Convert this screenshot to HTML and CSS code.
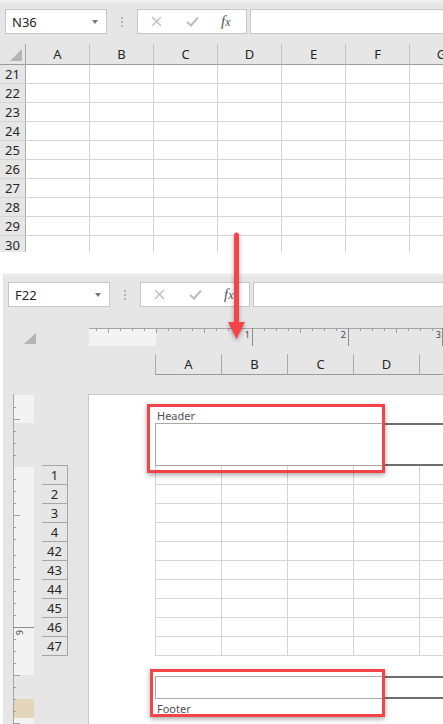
FILE: index.html
```html
<!DOCTYPE html>
<html lang="en">
<head>
    <meta charset="UTF-8">
    <meta name="viewport" content="width=device-width, initial-scale=1.0">
    <title>Excel Header and Footer</title>
    <link rel="stylesheet" href="styles.css">
</head>
<body>
<div class="shot">

    <!-- Normal view -->
    <section class="win win-top">
        <div class="fbar">
            <div class="namebox"><span>N36</span><i class="caret"></i></div>
            <div class="grip"><b></b><b></b><b></b></div>
            <div class="fbtns">
                <svg class="ico-x" width="11" height="11" viewBox="0 0 11 11"><path d="M1 1L10 10M10 1L1 10" /></svg>
                <svg class="ico-ok" width="13" height="11" viewBox="0 0 13 11"><path d="M1 6L5 9.5L12 1.5" /></svg>
                <span class="fx">f<small>x</small></span>
            </div>
            <div class="finput"></div>
        </div>

        <div class="sheet">
            <div class="row hdr">
                <div class="rh corner"><i class="tri"></i></div>
                <div class="c">A</div><div class="c">B</div><div class="c">C</div><div class="c">D</div>
                <div class="c">E</div><div class="c">F</div><div class="c">G</div><div class="c">H</div>
            </div>
            <div class="row"><div class="rh">21</div><div class="c"></div><div class="c"></div><div class="c"></div><div class="c"></div><div class="c"></div><div class="c"></div><div class="c"></div><div class="c"></div></div>
            <div class="row"><div class="rh">22</div><div class="c"></div><div class="c"></div><div class="c"></div><div class="c"></div><div class="c"></div><div class="c"></div><div class="c"></div><div class="c"></div></div>
            <div class="row"><div class="rh">23</div><div class="c"></div><div class="c"></div><div class="c"></div><div class="c"></div><div class="c"></div><div class="c"></div><div class="c"></div><div class="c"></div></div>
            <div class="row"><div class="rh">24</div><div class="c"></div><div class="c"></div><div class="c"></div><div class="c"></div><div class="c"></div><div class="c"></div><div class="c"></div><div class="c"></div></div>
            <div class="row"><div class="rh">25</div><div class="c"></div><div class="c"></div><div class="c"></div><div class="c"></div><div class="c"></div><div class="c"></div><div class="c"></div><div class="c"></div></div>
            <div class="row"><div class="rh">26</div><div class="c"></div><div class="c"></div><div class="c"></div><div class="c"></div><div class="c"></div><div class="c"></div><div class="c"></div><div class="c"></div></div>
            <div class="row"><div class="rh">27</div><div class="c"></div><div class="c"></div><div class="c"></div><div class="c"></div><div class="c"></div><div class="c"></div><div class="c"></div><div class="c"></div></div>
            <div class="row"><div class="rh">28</div><div class="c"></div><div class="c"></div><div class="c"></div><div class="c"></div><div class="c"></div><div class="c"></div><div class="c"></div><div class="c"></div></div>
            <div class="row"><div class="rh">29</div><div class="c"></div><div class="c"></div><div class="c"></div><div class="c"></div><div class="c"></div><div class="c"></div><div class="c"></div><div class="c"></div></div>
            <div class="row"><div class="rh">30</div><div class="c"></div><div class="c"></div><div class="c"></div><div class="c"></div><div class="c"></div><div class="c"></div><div class="c"></div><div class="c"></div></div>
        </div>
    </section>

    <!-- Page Layout view -->
    <section class="win win-page">
        <div class="fbar">
            <div class="namebox"><span>F22</span><i class="caret"></i></div>
            <div class="grip"><b></b><b></b><b></b></div>
            <div class="fbtns">
                <svg class="ico-x" width="11" height="11" viewBox="0 0 11 11"><path d="M1 1L10 10M10 1L1 10" /></svg>
                <svg class="ico-ok" width="13" height="11" viewBox="0 0 13 11"><path d="M1 6L5 9.5L12 1.5" /></svg>
                <span class="fx">f<small>x</small></span>
            </div>
            <div class="finput"></div>
        </div>

        <div class="pl-top">
            <div class="pl-corner"><i class="tri"></i></div>
            <div class="pl-rulers">
                <svg class="hruler" width="354" height="18" viewBox="0 0 354 18">
                    <rect x="0" y="0" width="67" height="18" fill="#f3f3f3" />
                    <path d="M0 0.5H354" stroke="#a6a6a6" />
                    <path stroke="#a0a0a0" d="M7.5 0v3M31.5 0v3M43.5 0v3M55.5 0v3M79.5 0v3M91.5 0v3M103.5 0v3M127.5 0v3M139.5 0v3M151.5 0v3M175.5 0v3M187.5 0v3M199.5 0v3M223.5 0v3M235.5 0v3M247.5 0v3M271.5 0v3M283.5 0v3M295.5 0v3M319.5 0v3M331.5 0v3M343.5 0v3" />
                    <path stroke="#a0a0a0" d="M19.5 0v5M67.5 0v5M115.5 0v5M211.5 0v5M307.5 0v5" />
                    <path stroke="#8c8c8c" d="M163.5 0v18M259.5 0v18M353.5 0v18" />
                    <text x="161" y="10" class="rnum" text-anchor="end">1</text>
                    <text x="257" y="10" class="rnum" text-anchor="end">2</text>
                    <text x="352" y="10" class="rnum" text-anchor="end">3</text>
                </svg>
                <div class="pl-cols">
                    <div>A</div><div>B</div><div>C</div><div>D</div><div>E</div>
                </div>
            </div>
        </div>

        <div class="pl-body">
            <svg class="vruler" width="21" height="330" viewBox="0 0 21 330">
                <rect x="1" y="1" width="20" height="28" fill="#f3f3f3" />
                <rect x="1" y="73" width="20" height="208" fill="#f3f3f3" />
                <rect x="1" y="305" width="20" height="19" fill="#e4d6ba" />
                <rect x="1" y="324" width="20" height="6" fill="#f3f3f3" />
                <path d="M0.5 0V330" stroke="#a6a6a6" />
                <path stroke="#a0a0a0" d="M0 13.5h3M0 37.5h3M0 49.5h3M0 61.5h3M0 85.5h3M0 97.5h3M0 109.5h3M0 133.5h3M0 145.5h3M0 161.5h3M0 173.5h3M0 197.5h3M0 209.5h3M0 221.5h3M0 245.5h3M0 257.5h3M0 269.5h3M0 293.5h3M0 305.5h3M0 317.5h3" />
                <path stroke="#a0a0a0" d="M0 25.5h7M0 121.5h7M0 185.5h7M0 281.5h7M0 329.5h7" />
                <path stroke="#8c8c8c" d="M0 233.5h21" />
                <text class="rnum" transform="translate(3 236) rotate(90)">6</text>
            </svg>

            <div class="pl-rows">
                <div>1</div><div>2</div><div>3</div><div>4</div><div>42</div>
                <div>43</div><div>44</div><div>45</div><div>46</div><div>47</div>
            </div>

            <div class="page">
                <div class="hf-label">Header</div>
                <div class="hf-box head"><div class="hf-left"></div><div class="hf-rest"></div></div>
                <div class="pgrid">
                    <div class="prow"><i></i><i></i><i></i><i></i><i></i></div>
                    <div class="prow"><i></i><i></i><i></i><i></i><i></i></div>
                    <div class="prow"><i></i><i></i><i></i><i></i><i></i></div>
                    <div class="prow"><i></i><i></i><i></i><i></i><i></i></div>
                    <div class="prow"><i></i><i></i><i></i><i></i><i></i></div>
                    <div class="prow"><i></i><i></i><i></i><i></i><i></i></div>
                    <div class="prow"><i></i><i></i><i></i><i></i><i></i></div>
                    <div class="prow"><i></i><i></i><i></i><i></i><i></i></div>
                    <div class="prow"><i></i><i></i><i></i><i></i><i></i></div>
                    <div class="prow"><i></i><i></i><i></i><i></i><i></i></div>
                </div>
                <div class="hf-box foot"><div class="hf-left"></div><div class="hf-rest"></div></div>
                <div class="hf-label under">Footer</div>
            </div>
        </div>
    </section>

    <!-- Annotations -->
    <svg class="arrow" width="22" height="112" viewBox="0 0 22 112">
        <path d="M10.5 5V96" stroke="#f4444a" stroke-width="5" stroke-linecap="round" />
        <path d="M2 92H19L10.5 109Z" fill="#f4444a" />
    </svg>
    <div class="mark mark-head"></div>
    <div class="mark mark-foot"></div>
</div>
</body>
</html>
```

FILE: styles.css
```css
/* Base */
body {
    margin: 0;
    background: #fff;
    font-family: "Noto Sans", "Open Sans", sans-serif;
    color: #262626;
}

.shot {
    position: relative;
    width: 443px;
    height: 724px;
    overflow: hidden;
}

/* Excel window */
.win {
    background: linear-gradient(#f2f2f2, #e6e6e6 5px);
    padding-top: 9px;
    box-sizing: border-box;
    overflow: hidden;
}

.win-top {
    height: 252px;
}

.win-page {
    margin-top: 21px;
    margin-left: 3px;
    height: 451px;
}

/* Formula bar */
.fbar {
    display: flex;
    height: 25px;
    padding-left: 5px;
}

.namebox {
    flex: none;
    width: 102px;
    box-sizing: border-box;
    border: 1px solid #c6c6c6;
    background: #fff;
    display: flex;
    align-items: center;
    justify-content: space-between;
    padding: 0 8px 0 6px;
    font-size: 13px;
}

.caret {
    width: 0;
    height: 0;
    border-left: 3.5px solid transparent;
    border-right: 3.5px solid transparent;
    border-top: 4px solid #757575;
}

.grip {
    flex: none;
    width: 30px;
    display: flex;
    flex-direction: column;
    align-items: center;
    justify-content: center;
    gap: 2px;
}

.grip b {
    width: 2px;
    height: 2px;
    background: #b5b5b5;
}

.fbtns {
    flex: none;
    width: 110px;
    box-sizing: border-box;
    border: 1px solid #c6c6c6;
    background: #fff;
    display: flex;
    align-items: center;
}

.fbtns svg {
    fill: none;
    stroke: #bdbdbd;
}

.ico-x {
    margin-left: 13px;
    stroke-width: 1.3;
}

.ico-ok {
    margin-left: 24px;
    stroke-width: 2;
}

.fx {
    margin-left: 22px;
    font-family: "Liberation Serif", serif;
    font-style: italic;
    font-size: 15px;
    color: #555;
}

.fx small {
    font-size: 12px;
}

.finput {
    flex: 1;
    margin-left: 3px;
    margin-right: -2px;
    border: 1px solid #c6c6c6;
    background: #fff;
}

/* Normal view grid */
.sheet {
    margin-top: 10px;
    font-size: 13px;
}

.row {
    display: flex;
    height: 19px;
}

.row.hdr {
    height: 21px;
}

.row > div {
    flex: none;
    box-sizing: border-box;
    display: flex;
    align-items: center;
    justify-content: center;
}

.rh {
    width: 26px;
    border-right: 1px solid #ababab;
    border-bottom: 1px solid #d4d4d4;
}

.c {
    width: 64px;
    background: #fff;
    border-right: 1px solid #d4d4d4;
    border-bottom: 1px solid #d4d4d4;
}

.hdr .c {
    background: none;
    border-right-color: #c2c2c2;
    border-bottom-color: #9b9b9b;
}

.hdr .rh {
    border-bottom-color: #9b9b9b;
}

.corner.rh {
    align-items: flex-end;
    justify-content: flex-end;
    padding: 0 3px 3px 0;
}

.tri {
    display: block;
    width: 0;
    height: 0;
    border-left: 12px solid transparent;
    border-bottom: 12px solid #b4b4b4;
}

/* Page layout view */
.pl-top {
    display: flex;
    height: 87px;
}

.pl-corner {
    flex: none;
    width: 86px;
    padding: 26px 0 0 21px;
    box-sizing: border-box;
}

.pl-corner .tri {
    border-left-width: 12px;
    border-bottom-width: 11px;
}

.pl-rulers {
    flex: 1;
    min-width: 0;
    padding-top: 21px;
}

.hruler,
.vruler {
    display: block;
    flex: none;
}

.rnum {
    font-family: "Noto Sans", sans-serif;
    font-size: 9px;
    fill: #444;
}

.pl-cols {
    display: flex;
    margin: 8px 0 0 66px;
    height: 20px;
    border-left: 1px solid #ababab;
    border-bottom: 1px solid #9b9b9b;
    font-size: 13px;
}

.pl-cols div {
    flex: none;
    width: 66px;
    box-sizing: border-box;
    border-right: 1px solid #ababab;
    display: flex;
    align-items: center;
    justify-content: center;
}

.pl-body {
    display: flex;
    height: 330px;
}

.vruler {
    margin-left: 10px;
}

.pl-rows {
    flex: none;
    width: 26px;
    margin: 71px 0 0 8px;
    align-self: flex-start;
    border-top: 1px solid #a6a6a6;
    font-size: 13px;
}

.pl-rows div {
    height: 19px;
    box-sizing: border-box;
    border-right: 1px solid #a6a6a6;
    border-bottom: 1px solid #a6a6a6;
    display: flex;
    align-items: center;
    justify-content: center;
}

.page {
    flex: 1;
    min-width: 0;
    margin-left: 20px;
    background: #fff;
    border-top: 1px solid #c8c8c8;
    border-left: 1px solid #c8c8c8;
    padding-left: 66px;
}

/* Header / footer areas */
.hf-label {
    font-size: 11px;
    line-height: 14px;
    color: #4f4f5a;
    padding: 14px 0 0 2px;
}

.hf-label.under {
    padding-top: 3px;
}

.hf-box {
    display: flex;
    height: 43px;
}

.hf-box.foot {
    height: 23px;
    margin-top: 20px;
}

.hf-left {
    flex: none;
    width: 229px;
    box-sizing: border-box;
    border: 1px solid #a9a9a9;
}

.hf-rest {
    flex: 1;
    border-top: 2px solid #6e6e6e;
    border-bottom: 2px solid #6e6e6e;
}

.pgrid {
    border-left: 1px solid #d4d4d4;
}

.prow {
    display: flex;
    height: 19px;
}

.prow i {
    flex: none;
    width: 66px;
    box-sizing: border-box;
    border-right: 1px solid #d4d4d4;
    border-bottom: 1px solid #d4d4d4;
}

/* Red annotations */
.arrow {
    position: absolute;
    left: 226px;
    top: 230px;
    filter: drop-shadow(0 2px 2px rgba(0, 0, 0, 0.35));
}

.mark {
    position: absolute;
    box-sizing: border-box;
    border: 3px solid #f4444a;
    box-shadow: 0 2px 5px rgba(0, 0, 0, 0.35);
}

.mark-head {
    left: 147px;
    top: 404px;
    width: 238px;
    height: 69px;
}

.mark-foot {
    left: 150px;
    top: 669px;
    width: 235px;
    height: 48px;
}
```
